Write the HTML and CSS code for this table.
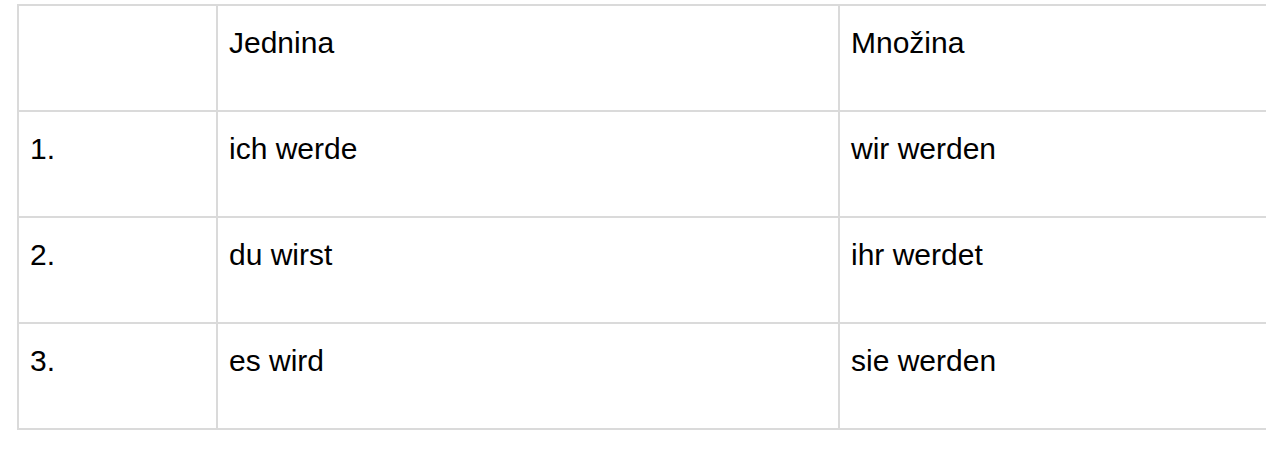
FILE: index.html
```html
<!DOCTYPE html>
<html lang="cs">
<head>
<meta charset="utf-8">
<title>werden</title>
<link rel="stylesheet" href="styles.css">
</head>
<body>
<div class="page">
  <table class="conj">
    <tr>
      <td class="c1"></td>
      <td class="c2">Jednina</td>
      <td class="c3">Množina</td>
    </tr>
    <tr>
      <td class="c1">1.</td>
      <td class="c2">ich werde</td>
      <td class="c3">wir werden</td>
    </tr>
    <tr>
      <td class="c1">2.</td>
      <td class="c2">du wirst</td>
      <td class="c3">ihr werdet</td>
    </tr>
    <tr>
      <td class="c1">3.</td>
      <td class="c2">es wird</td>
      <td class="c3">sie werden</td>
    </tr>
  </table>
</div>
</body>
</html>
```

FILE: styles.css
```css
html, body {
  margin: 0;
  padding: 0;
  background: #ffffff;
  overflow: hidden;
}

.page {
  padding: 4px 0 0 17px;
}

.conj {
  border-collapse: separate;
  border-spacing: 0;
  border-top: 2px solid #dadada;
  border-left: 2px solid #dadada;
  font-family: "Liberation Sans", Arial, sans-serif;
  font-size: 30px;
  line-height: 34px;
  color: #000000;
  table-layout: fixed;
}

.conj td {
  border-right: 2px solid #dadada;
  border-bottom: 2px solid #dadada;
  padding: 20px 11px 0 11px;
  height: 84px;
  vertical-align: top;
  box-sizing: content-box;
  white-space: nowrap;
}

.conj .c1 { width: 175px; }
.conj .c2 { width: 598px; }
.conj .c3 {
  width: 404px;
  border-right: none;
}
```
